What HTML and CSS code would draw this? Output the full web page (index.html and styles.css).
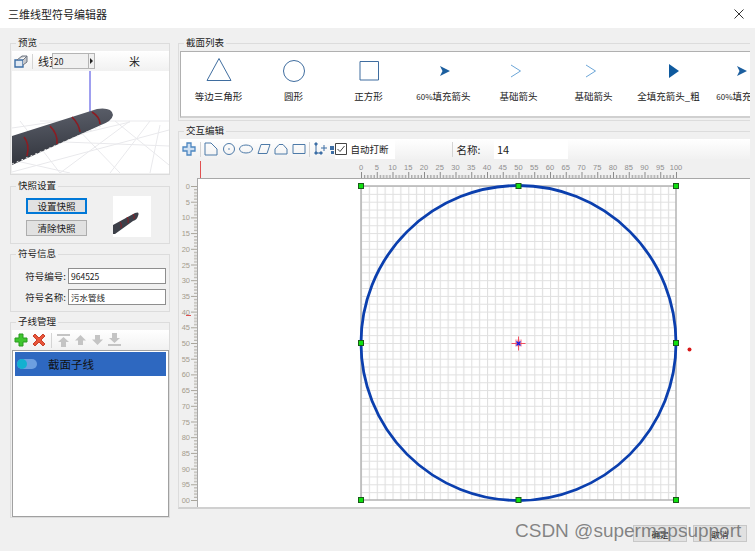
FILE: index.html
```html
<!DOCTYPE html>
<html lang="zh-CN">
<head>
    <meta charset="UTF-8">
    <title>三维线型符号编辑器</title>
    <link rel="stylesheet" href="styles.css">
</head>
<body>
<div class="window">
    <div class="titlebar">
        <span>三维线型符号编辑器</span>
        <svg class="close" width="10" height="10" viewBox="0 0 10 10"><path d="M0.5 0.5L9.5 9.5M9.5 0.5L0.5 9.5" stroke="#333" fill="none"/></svg>
    </div>

    <div class="main">
        <div class="side">
            <fieldset class="group group-preview">
                <legend>预览</legend>
                <div class="bar preview-bar">
                    <svg width="14" height="14" viewBox="0 0 14 14"><path d="M1 6h8v7H1z" fill="#dfe8f2" stroke="#3c6ea5" stroke-width="1.4"/><path d="M9 6l4-4v6l-4 3M3 6l5-4h5" fill="#c6c8cc" stroke="#6d7480"/></svg>
                    <i class="sep"></i>
                    <span class="clip-label">线宽</span>
                    <div class="spin"><span>20</span><b></b></div>
                    <span class="unit">米</span>
                </div>
                <svg class="scene" width="157" height="102" viewBox="12 71 157 102">
                    <defs>
                        <linearGradient id="pipe" x1="0.35" y1="0" x2="0.5" y2="1">
                            <stop offset="0" stop-color="#5c606b"/>
                            <stop offset="1" stop-color="#2f323a"/>
                        </linearGradient>
                    </defs>
                    <path d="M12 128L60 121M12 150L130 122M12 172L169 130M60 173L130 121M110 173L150 121M150 173L160 125M20 121L60 173M70 121L120 173M115 121L169 165M12 160L70 173M40 121H169M12 140L169 146" stroke="#e9e9ec" fill="none"/>
                    <path d="M90 71V112" stroke="#4040e0"/>
                    <path d="M12 136L97 109Q112 107 113 115Q112 121 101 125L12 165Z" fill="url(#pipe)"/>
                    <path d="M24 137Q30 144 27 156M50 126Q58 134 57 144M72 117Q79 124 80 132M92 112Q100 117 100 124" stroke="#8c1c22" stroke-width="1.6" fill="none"/>
                    <path d="M12 164L101 126" stroke="#e8e8e8" stroke-dasharray="2 3" fill="none"/>
                </svg>
            </fieldset>

            <fieldset class="group group-snap">
                <legend>快照设置</legend>
                <div class="snap">
                    <div class="snap-btns">
                        <button class="btn btn-focus">设置快照</button>
                        <button class="btn">清除快照</button>
                    </div>
                    <svg class="thumb" width="38" height="41" viewBox="0 0 38 41">
                        <path d="M0 29L22 17Q27 15 25 20Q24 24 20 25L2 38L0 38Z" fill="#3c3f48"/>
                        <path d="M7 26Q9 28 8 32M14 21Q16 23 15 27M20 18Q22 20 21 23" stroke="#8c1c22" fill="none"/>
                    </svg>
                </div>
            </fieldset>

            <fieldset class="group group-info">
                <legend>符号信息</legend>
                <div class="field"><label>符号编号:</label><div class="textbox">964525</div></div>
                <div class="field"><label>符号名称:</label><div class="textbox">污水管线</div></div>
            </fieldset>

            <fieldset class="group group-lines">
                <legend>子线管理</legend>
                <div class="bar lines-bar">
                    <svg width="14" height="14" viewBox="0 0 14 14"><path d="M5 1h4v4h4v4H9v4H5V9H1V5h4z" fill="#3fc62f" stroke="#2a9a20"/></svg>
                    <svg width="14" height="14" viewBox="0 0 14 14"><path d="M1 3L3 1L7 5L11 1L13 3L9 7L13 11L11 13L7 9L3 13L1 11L5 7Z" fill="#e8553a" stroke="#c8402a"/></svg>
                    <i class="sep"></i>
                    <svg width="13" height="14" viewBox="0 0 13 14"><path d="M0 1h13v2H0zM6.500 4L12 9H9v5H4V9H1z" fill="#c4c4c4"/></svg>
                    <svg width="13" height="14" viewBox="0 0 13 14"><path d="M6.500 2L12 7.500H9V12H4V7.500H1z" fill="#c4c4c4"/></svg>
                    <svg width="13" height="14" viewBox="0 0 13 14"><path d="M6.500 12L12 6.500H9V2H4V6.500H1z" fill="#c4c4c4"/></svg>
                    <svg width="13" height="14" viewBox="0 0 13 14"><path d="M0 11h13v2H0zM6.500 10L12 5H9V0H4V5H1z" fill="#c4c4c4"/></svg>
                </div>
                <div class="line-list">
                    <div class="line-row">
                        <span class="toggle"><i></i></span>
                        <span>截面子线</span>
                    </div>
                </div>
            </fieldset>
        </div>

        <div class="content">
            <fieldset class="group group-sections">
                <legend>截面列表</legend>
                <div class="gallery">
                    <div class="shape"><svg width="28" height="26" viewBox="0 0 28 26"><path d="M14 0.500L26 22.500H2Z" fill="none" stroke="#3f6d9f"/></svg><span>等边三角形</span></div>
                    <div class="shape"><svg width="28" height="26" viewBox="0 0 28 26"><circle cx="14" cy="13" r="10.500" fill="none" stroke="#3f6d9f"/></svg><span>圆形</span></div>
                    <div class="shape"><svg width="28" height="26" viewBox="0 0 28 26"><path d="M5 3.500H23.500V22H5Z" fill="none" stroke="#3f6d9f"/></svg><span>正方形</span></div>
                    <div class="shape"><svg width="28" height="26" viewBox="0 0 28 26"><path d="M10 8L20 13L10 18L12.500 13Z" fill="#1c5f9f"/></svg><span><small>60%</small>填充箭头</span></div>
                    <div class="shape"><svg width="28" height="26" viewBox="0 0 28 26"><path d="M6 7L15.500 13L6 19" fill="none" stroke="#6ca6d8"/></svg><span>基础箭头</span></div>
                    <div class="shape"><svg width="28" height="26" viewBox="0 0 28 26"><path d="M6 7L15.500 13L6 19" fill="none" stroke="#6ca6d8"/></svg><span>基础箭头</span></div>
                    <div class="shape"><svg width="28" height="26" viewBox="0 0 28 26"><path d="M14 6L24 13L14 20Z" fill="#0f5a9e"/></svg><span>全填充箭头_粗</span></div>
                    <div class="shape"><svg width="28" height="26" viewBox="0 0 28 26"><path d="M7 8L17 13L7 18L9.500 13Z" fill="#1c5f9f"/></svg><span><small>60%</small>填充箭头</span></div>
                </div>
            </fieldset>

            <fieldset class="group group-edit">
                <legend>交互编辑</legend>
                <div class="bar edit-bar">
                    <svg width="14" height="14" viewBox="0 0 14 14"><path d="M5 1h4v4h4v4H9v4H5V9H1V5h4z" fill="#cfe0f2" stroke="#4d86c0" stroke-width="1.300"/></svg>
                    <i class="sep"></i>
                    <svg width="14" height="14" viewBox="0 0 14 14"><path d="M1 1h6l6 6v6H1z" fill="none" stroke="#4d7aa8"/></svg>
                    <svg width="14" height="14" viewBox="0 0 14 14"><circle cx="7" cy="7" r="5.500" fill="none" stroke="#4d7aa8"/><circle cx="7" cy="7" r="0.800" fill="#4d7aa8"/></svg>
                    <svg width="14" height="14" viewBox="0 0 14 14"><ellipse cx="7" cy="7" rx="6.500" ry="4" fill="none" stroke="#4d7aa8"/></svg>
                    <svg width="14" height="14" viewBox="0 0 14 14"><path d="M4 2.500H13L10 11.500H1Z" fill="none" stroke="#4d7aa8"/></svg>
                    <svg width="14" height="14" viewBox="0 0 14 14"><path d="M1 7L5 2.500H9L13 7V12H1Z" fill="none" stroke="#4d7aa8"/></svg>
                    <svg width="14" height="14" viewBox="0 0 14 14"><path d="M1 2.500H13V11.500H1Z" fill="none" stroke="#4d7aa8"/></svg>
                    <i class="sep"></i>
                    <svg width="14" height="14" viewBox="0 0 14 14"><path d="M2 2V11H6" fill="none" stroke="#3c6ea5"/><path d="M1 1h2v2H1zM1 10h2v2H1zM6 10h2v2H6zM10 3v6M7 6h6" fill="#3c6ea5" stroke="#3c6ea5"/></svg>
                    <svg class="half" width="4" height="14" viewBox="0 0 4 14"><path d="M0 4h4v4H0zM1 9h3v3H1z" fill="#3c6ea5"/></svg>
                    <label class="check">
                        <svg width="12" height="12" viewBox="0 0 12 12"><path d="M0.500 0.500H11.500V11.500H0.500Z" fill="#fff" stroke="#444"/><path d="M2.500 6L5 8.500L9.500 3" fill="none" stroke="#444"/></svg>
                        <span>自动打断</span>
                    </label>
                    <i class="sep sep-name"></i>
                    <span class="name-label">名称:</span>
                    <div class="name-box">14</div>
                </div>

                <svg class="stage" width="570" height="348" viewBox="180 159 570 348">
                    <defs>
                        <pattern id="cells" x="361" y="186" width="15.750" height="15.700" patternUnits="userSpaceOnUse">
                            <path d="M0.500 0V15.700M8.375 0V15.700M0 0.500H15.750M0 8.350H15.750" stroke="#e0e0e0" stroke-width="1.200" fill="none"/>
                        </pattern>
                        <pattern id="ticks-x" x="361" y="172" width="15.750" height="6" patternUnits="userSpaceOnUse">
                            <path d="M0.500 0V6M3.650 3V6M6.800 3V6M9.950 3V6M13.100 3V6" stroke="#8a8a8a" fill="none"/>
                        </pattern>
                        <pattern id="ticks-y" x="191" y="186" width="6" height="15.700" patternUnits="userSpaceOnUse">
                            <path d="M0 0.500H6M3 3.640H6M3 6.780H6M3 9.920H6M3 13.060H6" stroke="#a8a49a" fill="none"/>
                        </pattern>
                    </defs>

                    <rect x="197" y="178" width="553" height="329" fill="#fff"/>
                    <path d="M197 178.500H750M197.500 178V507" stroke="#a8a8a8" fill="none"/>
                    <rect x="361" y="172" width="316" height="6" fill="url(#ticks-x)"/>
                    <rect x="191" y="186" width="6" height="315" fill="url(#ticks-y)"/>
                    <path d="M200.500 161V178M186 315.500H191" stroke="#e05050" fill="none"/>

                    <g class="ruler-x">
                        <text x="361" y="170">0</text><text x="376.750" y="170">5</text><text x="392.500" y="170">10</text><text x="408.250" y="170">15</text><text x="424" y="170">20</text><text x="439.750" y="170">25</text><text x="455.500" y="170">30</text><text x="471.250" y="170">35</text><text x="487" y="170">40</text><text x="502.750" y="170">45</text><text x="518.500" y="170">50</text><text x="534.250" y="170">55</text><text x="550" y="170">60</text><text x="565.750" y="170">65</text><text x="581.500" y="170">70</text><text x="597.250" y="170">75</text><text x="613" y="170">80</text><text x="628.750" y="170">85</text><text x="644.500" y="170">90</text><text x="660.250" y="170">95</text><text x="676" y="170">100</text>
                    </g>
                    <g class="ruler-y">
                        <text x="190" y="189">0</text><text x="190" y="204.700">5</text><text x="190" y="220.400">10</text><text x="190" y="236.100">15</text><text x="190" y="251.800">20</text><text x="190" y="267.500">25</text><text x="190" y="283.200">30</text><text x="190" y="298.900">35</text><text x="190" y="314.600">40</text><text x="190" y="330.300">45</text><text x="190" y="346">50</text><text x="190" y="361.700">55</text><text x="190" y="377.400">60</text><text x="190" y="393.100">65</text><text x="190" y="408.800">70</text><text x="190" y="424.500">75</text><text x="190" y="440.200">80</text><text x="190" y="455.900">85</text><text x="190" y="471.600">90</text><text x="190" y="487.300">95</text><text x="190" y="503">00</text>
                    </g>

                    <rect x="361" y="186" width="315" height="314" fill="url(#cells)"/>
                    <rect x="361" y="186" width="315" height="314" fill="none" stroke="#b4b4b4" stroke-width="1.500"/>
                    <circle cx="518.500" cy="343" r="157.500" fill="none" stroke="#0b3fae" stroke-width="2.800"/>

                    <g class="handles">
                        <rect x="358.500" y="183.500" width="5" height="5"/><rect x="516" y="183.500" width="5" height="5"/><rect x="673.500" y="183.500" width="5" height="5"/>
                        <rect x="358.500" y="340.500" width="5" height="5"/><rect x="673.500" y="340.500" width="5" height="5"/>
                        <rect x="358.500" y="497.500" width="5" height="5"/><rect x="516" y="497.500" width="5" height="5"/><rect x="673.500" y="497.500" width="5" height="5"/>
                    </g>
                    <rect x="515" y="339.500" width="7" height="7" fill="#f7b4c0"/>
                    <path d="M511.500 343.500H525.500M518.500 336.500V350.500" stroke="#f05060"/>
                    <path d="M516.500 341.500L520.500 345.500M520.500 341.500L516.500 345.500" stroke="#1818e0" stroke-width="1.400"/>
                    <circle cx="689.500" cy="349.500" r="2" fill="#d81818"/>
                </svg>
            </fieldset>
        </div>
    </div>

    <div class="footer">
        <button class="btn btn-flat">确定</button>
        <button class="btn btn-flat">取消</button>
    </div>

    <div class="watermark">CSDN @supermapsupport</div>
</div>
</body>
</html>
```

FILE: styles.css
```css
* {
    box-sizing: border-box;
}
body {
    margin: 0;
    background-color: #f0f0f0;
    font-family: "Noto Sans CJK SC", "Noto Sans", sans-serif;
    font-size: 9.5px;
    color: #222;
}
svg {
    display: block;
    flex: none;
}
.window {
    position: relative;
    width: 755px;
    height: 551px;
    overflow: hidden;
}

/* Title bar */
.titlebar {
    height: 28px;
    padding: 0 11px 0 8px;
    background-color: #fff;
    display: flex;
    align-items: center;
    justify-content: space-between;
    font-size: 11px;
}

/* Columns */
.main {
    height: 491px;
    display: flex;
    gap: 8px;
    padding: 7px 5px 0 10px;
}
.side {
    width: 160px;
    display: flex;
    flex-direction: column;
    gap: 2px;
}
.content {
    width: 572px;
    display: flex;
    flex-direction: column;
    gap: 2px;
}

/* Group boxes */
.group {
    margin: 0;
    min-width: 0;
    padding: 0 0 0 1px;
    border: 1px solid #dcdcdc;
}
.group legend {
    margin-left: 4px;
    padding: 0 2px 2px;
    line-height: 14px;
    font-size: 9.5px;
}
.group-preview { height: 140px; margin-bottom: 1px; }
.group-snap { height: 66px; }
.group-info { height: 66px; }
.group-lines { height: 204px; }
.group-sections { height: 86px; border-right: 0; }
.group-edit { height: 386px; border-right: 0; border-bottom: 2px solid #d0d0d0; }

/* Toolbars */
.bar {
    height: 20px;
    display: flex;
    align-items: center;
    background: linear-gradient(#fff, #f1f1f1);
}
.sep {
    flex: none;
    width: 1px;
    height: 15px;
    background-color: #d4d4d4;
}

/* Preview */
.preview-bar {
    width: 157px;
    padding-left: 2px;
}
.clip-label {
    width: 14px;
    margin-left: 5px;
    overflow: hidden;
    white-space: nowrap;
    font-size: 11px;
}
.preview-bar .sep {
    margin-left: 4px;
}
.spin {
    width: 43px;
    height: 16px;
    padding-left: 1px;
    border: 1px solid #b4b4b4;
    background-color: #f0f0f0;
    display: flex;
    align-items: center;
    justify-content: space-between;
    font-size: 8.5px;
}
.spin b {
    position: relative;
    width: 6px;
    height: 14px;
    border-left: 1px solid #b4b4b4;
}
.spin b::after {
    content: "";
    position: absolute;
    left: 1px;
    top: 4px;
    border-left: 3px solid #222;
    border-top: 3px solid transparent;
    border-bottom: 3px solid transparent;
}
.unit {
    margin-left: 34px;
    font-size: 11px;
}
.scene {
    background-color: #fff;
}

/* Snapshot */
.snap {
    display: flex;
    padding: 2px 0 0 14px;
}
.snap-btns {
    width: 61px;
    display: flex;
    flex-direction: column;
    gap: 6px;
    padding-top: 2px;
}
.btn {
    width: 61px;
    height: 16px;
    padding: 0;
    border: 1px solid #adadad;
    background-color: #e1e1e1;
    font-family: inherit;
    font-size: 9.5px;
    color: #222;
}
.btn-focus {
    border: 1px solid #0078d7;
    outline: 1px solid #0078d7;
    outline-offset: -2px;
}
.thumb {
    margin-left: 26px;
    background-color: #fff;
}

/* Symbol info */
.field {
    display: flex;
    align-items: center;
    justify-content: flex-end;
    gap: 2px;
    height: 16px;
    margin: 6px 3px 5px 0;
}
.field + .field {
    margin-top: 0;
}
.textbox {
    width: 98px;
    height: 16px;
    padding-left: 2px;
    border: 1px solid #8e8e8e;
    background-color: #fff;
    line-height: 14px;
    font-size: 8.5px;
}

/* Sub lines */
.lines-bar {
    width: 157px;
    gap: 4px;
    padding-left: 2px;
}
.lines-bar .sep {
    margin: 0 1px;
}
.line-list {
    width: 157px;
    height: 167px;
    padding: 1px 2px;
    border: 1px solid #a0a0a0;
    background-color: #fff;
}
.line-row {
    height: 24px;
    display: flex;
    align-items: center;
    gap: 11px;
    padding-left: 2px;
    background-color: #2e68c0;
    font-size: 11.5px;
    color: #111;
}
.toggle {
    width: 20px;
    height: 10px;
    border-radius: 5px;
    background-color: #6d9fe0;
}
.toggle i {
    display: block;
    width: 10px;
    height: 10px;
    border-radius: 50%;
    background-color: #12b0d0;
}

/* Section list */
.gallery {
    height: 67px;
    border: 1px solid #b0b0b0;
    border-right: 0;
    border-bottom-width: 2px;
    border-bottom-color: #d0d0d0;
    background-color: #fff;
    display: flex;
    overflow: hidden;
}
.shape {
    flex: none;
    width: 75px;
    padding-top: 6px;
    display: flex;
    flex-direction: column;
    align-items: center;
    gap: 5px;
    white-space: nowrap;
}
.shape span {
    line-height: 14px;
}
.shape small {
    font-size: 8px;
}

/* Edit toolbar */
.edit-bar {
    gap: 3.5px;
    padding-left: 2px;
}
.edit-bar .half {
    margin-left: -1px;
}
.check {
    width: 60px;
    height: 20px;
    margin-left: -3px;
    display: flex;
    align-items: center;
    gap: 4px;
    background-color: #fff;
}
.sep-name {
    margin-left: 53.5px;
}
.name-label {
    width: 34px;
    margin-left: 0.5px;
    font-size: 10.5px;
}
.name-box {
    width: 74px;
    height: 20px;
    padding-left: 3px;
    background-color: #fff;
    line-height: 20px;
    font-size: 11px;
}

/* Ruler and drawing */
.stage {
    font-family: "Liberation Sans", sans-serif;
    font-size: 7.5px;
}
.ruler-x text {
    text-anchor: middle;
    fill: #8f8f8f;
}
.ruler-y text {
    text-anchor: end;
    fill: #a49c8c;
}
.handles rect {
    fill: #0fe00f;
    stroke: #1a5a1a;
    stroke-width: 1;
}

/* Bottom buttons */
.footer {
    display: flex;
    justify-content: flex-end;
    gap: 6px;
    padding: 6px 8px 0 0;
}
.btn-flat {
    width: 54px;
    height: 17px;
    border-color: #c8c8c8;
    font-size: 8.5px;
}

/* Watermark over the dialog */
.watermark {
    position: absolute;
    left: 515px;
    top: 520px;
    font-family: "Liberation Sans", sans-serif;
    font-size: 19px;
    color: rgba(95, 95, 95, 0.75);
    white-space: nowrap;
}
```
